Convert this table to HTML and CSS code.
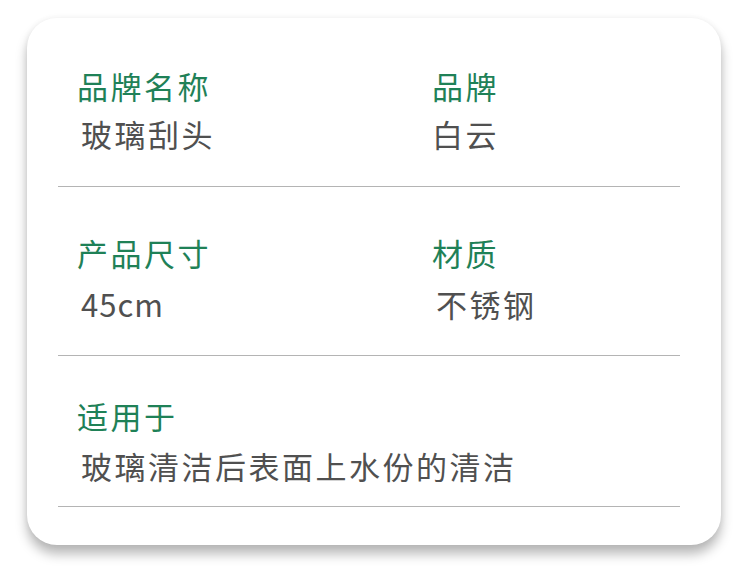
FILE: index.html
```html
<!DOCTYPE html>
<html lang="zh">
<head>
<meta charset="utf-8">
<link rel="stylesheet" href="styles.css">
</head>
<body>
<div class="card">
  <div class="row row-1">
    <div class="cell">
      <div class="label">品牌名称</div>
      <div class="value v-indent">玻璃刮头</div>
    </div>
    <div class="cell">
      <div class="label">品牌</div>
      <div class="value">白云</div>
    </div>
  </div>
  <div class="row row-2">
    <div class="cell">
      <div class="label">产品尺寸</div>
      <div class="value v-indent latin">45cm</div>
    </div>
    <div class="cell">
      <div class="label">材质</div>
      <div class="value v-indent">不锈钢</div>
    </div>
  </div>
  <div class="row row-3">
    <div class="cell cell-wide">
      <div class="label">适用于</div>
      <div class="value v-indent">玻璃清洁后表面上水份的清洁</div>
    </div>
  </div>
</div>
</body>
</html>
```
FILE: styles.css
```css
html, body {
  margin: 0;
  padding: 0;
  background: #ffffff;
}
body {
  width: 750px;
  height: 568px;
  overflow: hidden;
  font-family: "Noto Sans CJK SC", "Noto Sans", sans-serif;
}
.card {
  box-sizing: border-box;
  margin: 18px 0 0 27px;
  width: 694px;
  height: 527px;
  background: #ffffff;
  border-radius: 30px;
  box-shadow: 0 9px 12px rgba(0, 0, 0, 0.28), 0 0 6px rgba(0, 0, 0, 0.06);
  padding: 0 41px 0 31px;
}
.row {
  display: grid;
  grid-template-columns: 355px 1fr;
  border-bottom: 1px solid #b4b4b4;
  padding-left: 19px;
}
.row-1 { padding-top: 44px; padding-bottom: 28px; }
.row-2 { padding-top: 42px; padding-bottom: 27px; }
.row-2 .value { margin-top: 3px; }
.row-3 { padding-top: 36px; padding-bottom: 16px; }
.row-3 .value { margin-top: 2px; }
.cell {
  display: flex;
  flex-direction: column;
}
.cell-wide {
  grid-column: 1 / -1;
}
.label {
  font-size: 31px;
  line-height: 48px;
  color: #1f8157;
  letter-spacing: 2.5px;
}
.value {
  font-size: 31px;
  line-height: 48px;
  color: #505050;
  letter-spacing: 2.5px;
  white-space: nowrap;
}
.v-indent {
  padding-left: 4px;
}
.latin {
  letter-spacing: 1px;
}
```
